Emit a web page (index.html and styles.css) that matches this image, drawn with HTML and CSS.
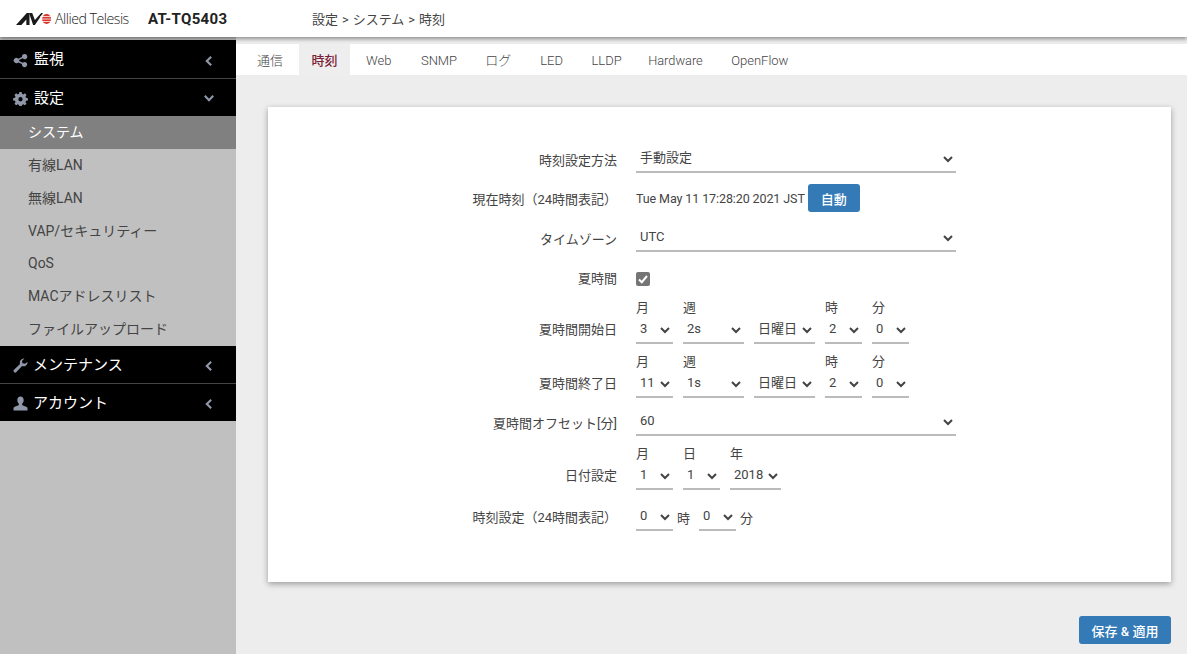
FILE: index.html
```html
<!DOCTYPE html>
<html lang="ja">
<head>
  <meta charset="UTF-8" />
  <meta name="viewport" content="width=device-width, initial-scale=1.0"/>
  <title>AT-TQ5403</title>
  <link rel="stylesheet" href="styles.css">
</head>
<body>

<header class="topbar">
  <div class="brand">
    <svg class="logo-mark" viewBox="0 0 40 12" width="36" height="12" preserveAspectRatio="none">
      <path d="M0 12 L12 0 H15 V12 H11.500 V6.500 L6 12 Z" fill="#1a1a1a"/>
      <path d="M14.500 0 H18 L21 7 L28 0 H30 L21 12 H19 Z" fill="#1a1a1a"/>
      <circle cx="34" cy="6" r="5" fill="#d8392f"/>
      <path d="M27 3.500 H40 M27 6 H40 M27 8.500 H40" stroke="#fff" stroke-width="0.8"/>
    </svg>
    <span class="logo-text">Allied Telesis</span>
  </div>
  <div class="model">AT-TQ5403</div>
  <div class="crumbs">設定 &gt; システム &gt; 時刻</div>
</header>

<div class="layout">
  <aside class="sidebar">
    <div class="nav-head nav-first">
      <svg class="nav-icon" viewBox="0 0 16 16"><path d="M12.500 1a2.800 2.800 0 1 1-2.100 4.700L6.500 7.400a2.800 2.800 0 0 1 0 1.200l3.900 1.700a2.800 2.800 0 1 1-.8 1.400L5.500 10a2.800 2.800 0 1 1 0-4l4.100-1.700A2.800 2.800 0 0 1 12.500 1z"/></svg>
      <span class="nav-title">監視</span>
      <svg class="nav-arrow" viewBox="0 0 10 10"><path d="M6.800 1.500 L3.200 5 L6.800 8.500"/></svg>
    </div>
    <div class="nav-head nav-open">
      <svg class="nav-icon" viewBox="0 0 16 16"><path d="M6.800 1h2.400l.4 2 1.300.6 1.800-1.100 1.700 1.700-1.100 1.800.6 1.300 2 .4v2.400l-2 .4-.6 1.300 1.100 1.800-1.700 1.700-1.800-1.100-1.300.6-.4 2H6.800l-.4-2-1.300-.6-1.800 1.100-1.700-1.700 1.100-1.800-.6-1.300-2-.4V7.700l2-.4.6-1.300-1.100-1.800 1.700-1.700 1.800 1.100 1.300-.6zM8 6.500a2.300 2.300 0 1 0 0 4.600 2.300 2.300 0 0 0 0-4.600z" fill-rule="evenodd"/></svg>
      <span class="nav-title">設定</span>
      <svg class="nav-arrow" viewBox="0 0 10 10"><path d="M1.500 3.200 L5 6.800 L8.500 3.200"/></svg>
    </div>
    <a class="nav-item active">システム</a>
    <a class="nav-item">有線LAN</a>
    <a class="nav-item">無線LAN</a>
    <a class="nav-item">VAP/セキュリティー</a>
    <a class="nav-item">QoS</a>
    <a class="nav-item">MACアドレスリスト</a>
    <a class="nav-item">ファイルアップロード</a>
    <div class="nav-head">
      <svg class="nav-icon" viewBox="0 0 16 16"><path d="M15.600 4.200a4.400 4.400 0 0 1-5.900 4.400L3.600 15a1.700 1.700 0 0 1-2.500-2.400l6.400-6.200A4.400 4.400 0 0 1 12.200.6L9.600 3.200l.5 2.400 2.400.6z"/></svg>
      <span class="nav-title nav-title-tight">メンテナンス</span>
      <svg class="nav-arrow" viewBox="0 0 10 10"><path d="M6.800 1.500 L3.200 5 L6.800 8.500"/></svg>
    </div>
    <div class="nav-head">
      <svg class="nav-icon" viewBox="0 0 16 16"><path d="M8 0.500c2.100 0 3.400 1.600 3.400 3.800 0 1.700-.7 3.100-1.600 3.900v1.500c0 .8 5.700 1.300 5.700 3.500v2.300H.5v-2.300c0-2.200 5.700-2.700 5.700-3.500V8.200C5.300 7.400 4.600 6 4.600 4.300 4.600 2.100 5.900.5 8 .5z"/></svg>
      <span class="nav-title nav-title-tight">アカウント</span>
      <svg class="nav-arrow" viewBox="0 0 10 10"><path d="M6.800 1.500 L3.200 5 L6.800 8.500"/></svg>
    </div>
  </aside>

  <main class="main">
    <nav class="tabs">
      <a class="tab tab-first">通信</a>
      <a class="tab current">時刻</a>
      <a class="tab tab-web">Web</a>
      <a class="tab">SNMP</a>
      <a class="tab tab-log">ログ</a>
      <a class="tab">LED</a>
      <a class="tab tab-lldp">LLDP</a>
      <a class="tab tab-hw">Hardware</a>
      <a class="tab">OpenFlow</a>
    </nav>

    <section class="card">
      <div class="row">
        <label class="row-label">時刻設定方法</label>
        <select class="field w-full"><option>手動設定</option></select>
      </div>
      <div class="row row-now">
        <label class="row-label">現在時刻（24時間表記）</label>
        <span class="now-text">Tue May 11 17:28:20 2021 JST</span>
        <button class="btn btn-auto">自動</button>
      </div>
      <div class="row">
        <label class="row-label">タイムゾーン</label>
        <select class="field w-full"><option>UTC</option></select>
      </div>
      <div class="row row-check">
        <label class="row-label">夏時間</label>
        <span class="check">
          <svg viewBox="0 0 14 14" width="14" height="14"><path d="M3 7.500 L5.800 10.200 L11 4" fill="none" stroke="#fff" stroke-width="2"/></svg>
        </span>
      </div>
      <div class="row row-group">
        <label class="row-label">夏時間開始日</label>
        <div class="group">
          <div class="col"><span class="col-label">月</span><select class="field w-num"><option>3</option></select></div>
          <div class="col"><span class="col-label">週</span><select class="field w-week"><option>2s</option></select></div>
          <div class="col"><span class="col-label">&nbsp;</span><select class="field w-day"><option>日曜日</option></select></div>
          <div class="col"><span class="col-label">時</span><select class="field w-num"><option>2</option></select></div>
          <div class="col"><span class="col-label">分</span><select class="field w-num"><option>0</option></select></div>
        </div>
      </div>
      <div class="row row-group">
        <label class="row-label">夏時間終了日</label>
        <div class="group">
          <div class="col"><span class="col-label">月</span><select class="field w-num"><option>11</option></select></div>
          <div class="col"><span class="col-label">週</span><select class="field w-week"><option>1s</option></select></div>
          <div class="col"><span class="col-label">&nbsp;</span><select class="field w-day"><option>日曜日</option></select></div>
          <div class="col"><span class="col-label">時</span><select class="field w-num"><option>2</option></select></div>
          <div class="col"><span class="col-label">分</span><select class="field w-num"><option>0</option></select></div>
        </div>
      </div>
      <div class="row">
        <label class="row-label">夏時間オフセット[分]</label>
        <select class="field w-full"><option>60</option></select>
      </div>
      <div class="row row-group">
        <label class="row-label">日付設定</label>
        <div class="group">
          <div class="col"><span class="col-label">月</span><select class="field w-num"><option>1</option></select></div>
          <div class="col"><span class="col-label">日</span><select class="field w-num"><option>1</option></select></div>
          <div class="col"><span class="col-label">年</span><select class="field w-year"><option>2018</option></select></div>
        </div>
      </div>
      <div class="row row-time">
        <label class="row-label">時刻設定（24時間表記）</label>
        <select class="field w-num"><option>0</option></select>
        <span class="unit">時</span>
        <select class="field w-num"><option>0</option></select>
        <span class="unit">分</span>
      </div>
    </section>

    <div class="actions">
      <button class="btn btn-save">保存 &amp; 適用</button>
    </div>
  </main>
</div>

</body>
</html>
```

FILE: styles.css
```css
* {
  margin: 0;
  padding: 0;
  box-sizing: border-box;
}

body {
  font-family: Roboto, "Noto Sans CJK JP", sans-serif;
  font-size: 13px;
  color: #333;
  background: #ededed;
  height: 654px;
  overflow: hidden;
}

/* header */
.topbar {
  display: flex;
  align-items: center;
  height: 37px;
  background: #fff;
  box-shadow: 0 2px 4px rgba(0, 0, 0, 0.4);
  position: relative;
  z-index: 2;
}

.brand {
  display: flex;
  align-items: center;
  margin-left: 16px;
  width: 132px;
}

.logo-text {
  font-family: "Open Sans", sans-serif;
  font-weight: 300;
  font-size: 14.2px;
  letter-spacing: -0.5px;
  color: #222;
  margin-left: 3px;
}

.model {
  width: 164px;
  font-size: 15px;
  font-weight: 700;
  letter-spacing: 0.35px;
  color: #222;
}

.crumbs {
  color: #444;
  word-spacing: 0.75px;
}

.layout {
  display: flex;
  height: 617px;
}

/* left menu */
.sidebar {
  width: 236px;
  flex: none;
  background: #c0c0c0;
  padding-top: 3px;
}

.nav-head {
  display: flex;
  align-items: center;
  height: 38px;
  background: #000;
  color: #fff;
  font-size: 15px;
  padding-left: 13px;
  border-bottom: 1px solid #444;
}

.nav-first {
  height: 39px;
}

.nav-open {
  border-bottom: 0;
  height: 37px;
}

.nav-head:last-child {
  border-bottom: 0;
  height: 37px;
}

.nav-icon {
  width: 15px;
  height: 15px;
  fill: #8f97a8;
  flex: none;
  margin: 2px 6px 0 0;
}

.nav-title {
  flex: 1;
  margin-top: -3px;
}

.nav-title-tight {
  margin: -1px 0 0 -1px;
}

.nav-arrow {
  width: 12px;
  height: 12px;
  fill: none;
  stroke: #8f97a8;
  stroke-width: 1.8;
  margin: 4px 21px 0 0;
}

.nav-open .nav-arrow {
  margin-top: 0;
}

.nav-item {
  display: block;
  height: 32.857px;
  line-height: 32px;
  padding-left: 28px;
  font-size: 14px;
  color: #444;
}

.nav-item.active {
  background: #808080;
  color: #fff;
}

/* tabs and card */
.main {
  flex: 1;
  padding-top: 7px;
}

.tabs {
  display: flex;
  height: 31px;
  background: #fff;
}

.tab {
  padding: 0 14.5px;
  line-height: 34px;
  color: #444;
  font-weight: 300;
}

.tab.current {
  background: #eee;
  color: #7a2238;
  font-weight: 500;
  padding: 0 12.5px;
}

.tab-first { padding: 0 16px 0 21px; }
.tab-web { padding: 0 15px 0 16px; }
.tab-log { padding: 0 14.5px 0 13.5px; }
.tab-lldp { padding: 0 12.5px 0 14px; }
.tab-hw { padding: 0 14px; font-size: 12.8px; }

.card {
  margin: 32px 16px 0 32px;
  height: 475px;
  background: #fff;
  box-shadow: 0 2px 6px rgba(0, 0, 0, 0.35);
  padding-top: 39px;
}

.row {
  display: flex;
  align-items: center;
  margin-bottom: 11px;
}

.row-label {
  width: 349px;
  flex: none;
  margin-right: 19px;
  text-align: right;
  color: #444;
}

.row-now {
  margin-bottom: 13px;
}

.now-text {
  margin-right: 3px;
  color: #444;
  white-space: nowrap;
  font-size: 12.5px;
  letter-spacing: -0.1px;
}

.row-check {
  height: 14px;
  margin: 20px 0 15px;
}

.row-check .row-label {
  position: relative;
  top: -2px;
}

.row-group {
  align-items: flex-end;
}

.row-group .row-label {
  position: relative;
  bottom: 6px;
}

.row-time {
  margin-top: 14px;
}

.row-time .row-label {
  position: relative;
  top: -1px;
}

.check {
  display: block;
  width: 14px;
  height: 14px;
  background: #757575;
  border-radius: 2px;
}

.group {
  display: flex;
  gap: 10px;
}

.col {
  display: flex;
  flex-direction: column;
}

.col-label {
  height: 16px;
  line-height: 14px;
  color: #444;
}

.field {
  height: 27px;
  border: 0;
  border-bottom: 2px solid #bbb;
  background: #fff;
  font-family: inherit;
  font-size: 13px;
  color: #444;
  outline: 0;
  padding-bottom: 3px;
}

.w-full { width: 320px; }
.w-num { width: 37px; }
.w-week { width: 61px; }
.w-day { width: 61px; }
.w-year { width: 51px; }

.unit {
  margin: 0 9px 0 4px;
  color: #444;
}

.unit:last-child {
  margin: 0 4px;
}

.btn {
  border: 0;
  border-radius: 3px;
  background: #337ab7;
  color: #fff;
  font-family: inherit;
  font-size: 13px;
  font-weight: 500;
}

.btn-auto {
  width: 52px;
  height: 28px;
}

.actions {
  display: flex;
  justify-content: flex-end;
  margin: 34px 16px 0 0;
}

.btn-save {
  width: 92px;
  height: 28px;
}
```
